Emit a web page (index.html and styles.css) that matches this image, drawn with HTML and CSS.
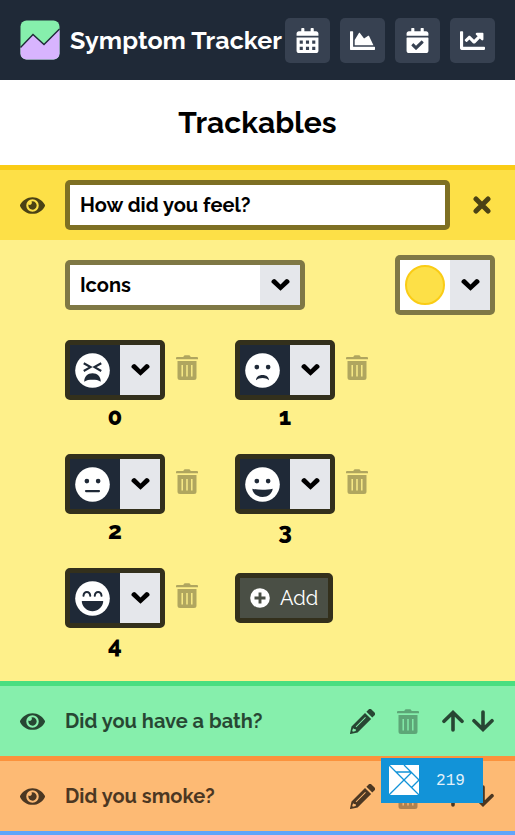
FILE: index.html
```html
<!DOCTYPE html>
<html lang="en">
<head>
<meta charset="utf-8">
<title>Symptom Tracker</title>
<link rel="stylesheet" href="styles.css">
</head>
<body>
<svg class="defs" aria-hidden="true">
  <symbol id="chevron" viewBox="0 0 20 14"><path d="M10 13 1.100 4.900a2 2 0 0 1 0-2.800L2 1.300a2 2 0 0 1 2.700 0L10 6.400l5.300-5.100a2 2 0 0 1 2.700 0l.9.800a2 2 0 0 1 0 2.800z" fill="currentColor"/></symbol>
  <symbol id="trash" viewBox="0 0 22 25"><path fill="currentColor" fill-rule="evenodd" d="M1 2h6.300c.5-1.300 1-1.800 2-1.800h3.400c1 0 1.500.5 2 1.800H21a1 1 0 0 1 1 1v1.200H0V3a1 1 0 0 1 1-1zM1.500 6h19v16.500A2.500 2.500 0 0 1 18 25H4a2.500 2.500 0 0 1-2.500-2.500zM5.500 10v11.500h1.400V10zm4.800 0v11.500h1.400V10zm4.800 0v11.500h1.400V10z"/></symbol>
  <symbol id="eye" viewBox="0 0 576 512"><path fill="currentColor" d="M572.52 241.4C518.29 135.59 410.93 64 288 64S57.68 135.64 3.48 241.41a32.35 32.35 0 0 0 0 29.19C57.71 376.41 165.07 448 288 448s230.32-71.64 284.52-177.41a32.35 32.35 0 0 0 0-29.19zM288 400a144 144 0 1 1 144-144 143.93 143.93 0 0 1-144 144zm0-240a95.31 95.31 0 0 0-25.31 3.79 47.85 47.85 0 0 1-66.9 66.9A95.78 95.78 0 1 0 288 160z"/></symbol>
  <symbol id="pencil" viewBox="0 0 25 25"><path fill="currentColor" fill-rule="evenodd" d="M15 3.900l6.100 6.100L7.600 23.500 0.600 25a.6.6 0 0 1-.6-.6l1.500-7zM3.100 19.300 2.200 22l.8.8 2.800-.9v-1.700l-1.700-.1zM5.700 17.600l.6.6L15.800 8.700l-.6-.6zM16.400 2.700l2-2a2.300 2.300 0 0 1 3.300 0l2.600 2.600a2.300 2.300 0 0 1 0 3.300l-2 2z"/></symbol>
  <symbol id="arrow" viewBox="0 0 22 22"><path d="M11 20V3M2 11.300 11 2.500l9 8.800" fill="none" stroke="currentColor" stroke-width="3.600" stroke-linecap="round"/></symbol>
</svg>

<header class="topbar">
  <svg class="logo" viewBox="0 0 40 40"><rect x=".5" y=".5" width="39" height="39" rx="6" fill="#86efac"/><path d="M.5 27.500 13 14.500l11 10L39.500 9v24.500a6 6 0 0 1-6 6h-27a6 6 0 0 1-6-6z" fill="#d8b4fe"/><path d="M.5 27.500 13 14.500l11 10L39.500 9" fill="none" stroke="#1f2937" stroke-width="1.400"/></svg>
  <h1 class="brand">Symptom Tracker</h1>
  <nav class="nav">
    <a class="nav-btn"><svg viewBox="0 0 448 512"><path fill="currentColor" fill-rule="evenodd" d="M0 464c0 26.500 21.500 48 48 48h352c26.500 0 48-21.500 48-48V192H0zM64 256h64v64H64zm128 0h64v64h-64zm128 0h64v64h-64zM64 384h64v64H64zm128 0h64v64h-64zm128 0h64v64h-64zM400 64h-48V16c0-8.800-7.200-16-16-16h-32c-8.800 0-16 7.200-16 16v48H160V16c0-8.800-7.200-16-16-16h-32c-8.800 0-16 7.200-16 16v48H48C21.500 64 0 85.500 0 112v48h448v-48c0-26.500-21.500-48-48-48z"/></svg></a>
    <a class="nav-btn"><svg viewBox="0 0 512 512"><path fill="currentColor" d="M500 384c6.600 0 12 5.400 12 12v40c0 6.600-5.400 12-12 12H12c-6.600 0-12-5.400-12-12V76c0-6.600 5.400-12 12-12h40c6.600 0 12 5.400 12 12v308h436zM372.700 159.500L288 216l-85.300-113.700c-5.100-6.800-15.500-6.300-19.900 1L96 248v104h384l-89.900-187.800c-3.200-6.500-11.400-8.700-17.400-4.700z"/></svg></a>
    <a class="nav-btn"><svg viewBox="0 0 448 512"><path fill="currentColor" d="M436 160H12c-6.627 0-12-5.373-12-12v-36c0-26.510 21.490-48 48-48h48V12c0-6.627 5.373-12 12-12h40c6.627 0 12 5.373 12 12v52h128V12c0-6.627 5.373-12 12-12h40c6.627 0 12 5.373 12 12v52h48c26.510 0 48 21.490 48 48v36c0 6.627-5.373 12-12 12zM12 192h424c6.627 0 12 5.373 12 12v260c0 26.510-21.490 48-48 48H48c-26.510 0-48-21.490-48-48V204c0-6.627 5.373-12 12-12zm333.296 95.947l-28.169-28.398c-4.667-4.705-12.265-4.736-16.970-.068L194.120 364.665l-45.980-46.352c-4.667-4.705-12.266-4.736-16.971-.068l-28.397 28.170c-4.705 4.667-4.736 12.265-.068 16.970l82.601 83.269c4.667 4.705 12.265 4.736 16.970.068l142.953-141.805c4.705-4.667 4.736-12.265.068-16.970z"/></svg></a>
    <a class="nav-btn"><svg viewBox="0 0 512 512"><path fill="currentColor" d="M496 384H64V80c0-8.840-7.160-16-16-16H16C7.160 64 0 71.160 0 80v336c0 17.670 14.330 32 32 32h464c8.840 0 16-7.160 16-16v-32c0-8.840-7.160-16-16-16zM464 96H345.940c-21.380 0-32.090 25.850-16.970 40.970l32.400 32.400L288 242.750l-73.370-73.370c-12.500-12.500-32.760-12.500-45.250 0l-68.690 68.690c-6.250 6.250-6.250 16.380 0 22.630l22.620 22.620c6.250 6.250 16.380 6.250 22.630 0L192 237.250l73.370 73.370c12.500 12.500 32.760 12.500 45.250 0l96-96 32.400 32.400c15.120 15.120 40.970 4.410 40.970-16.970V112c.01-8.840-7.150-16-15.990-16z"/></svg></a>
  </nav>
</header>

<h2 class="page-title">Trackables</h2>

<main>
  <section class="yellow">
    <div class="row">
      <svg class="eye"><use href="#eye"/></svg>
      <div class="field name-field"><span>How did you feel?</span></div>
      <svg class="close" viewBox="0 0 18 18"><path d="M3 3l12 12M15 3 3 15" fill="none" stroke="currentColor" stroke-width="5" stroke-linecap="round"/></svg>
    </div>
    <div class="panel">
      <div class="options">
        <div class="field select"><span class="select-text">Icons</span><span class="drop"><svg><use href="#chevron"/></svg></span></div>
        <div class="field picker"><span class="swatch-box"><i class="swatch"></i></span><span class="drop"><svg><use href="#chevron"/></svg></span></div>
      </div>
      <div class="icons">
        <div class="item">
          <div class="choice"><div class="picker dark"><span class="face"><svg viewBox="0 0 36 36"><circle cx="18" cy="18" r="17.800" fill="#fff"/><path d="M9 10.500l7 4-7 4M27 10.500l-7 4 7 4" fill="none" stroke="#1f2937" stroke-width="2.200"/><path d="M9.500 29.500c0-5.500 3.500-8.700 8.500-8.700s8.500 3.200 8.500 8.700c-2.500-1.700-5-2-8.500-2s-6 .3-8.500 2z" fill="#1f2937"/></svg></span><span class="drop"><svg><use href="#chevron"/></svg></span></div><span class="num">0</span></div>
          <svg class="trash"><use href="#trash"/></svg>
        </div>
        <div class="item">
          <div class="choice"><div class="picker dark"><span class="face"><svg viewBox="0 0 36 36"><circle cx="18" cy="18" r="17.800" fill="#fff"/><circle cx="12.200" cy="14.500" r="2.400" fill="#1f2937"/><circle cx="23.800" cy="14.500" r="2.400" fill="#1f2937"/><path d="M11.300 28c0-3.300 2.700-5.500 6.700-5.500s6.700 2.200 6.700 5.500c-2-1.500-4-2.200-6.700-2.200s-4.700.7-6.700 2.200z" fill="#1f2937"/></svg></span><span class="drop"><svg><use href="#chevron"/></svg></span></div><span class="num">1</span></div>
          <svg class="trash"><use href="#trash"/></svg>
        </div>
        <div class="item">
          <div class="choice"><div class="picker dark"><span class="face"><svg viewBox="0 0 36 36"><circle cx="18" cy="18" r="17.800" fill="#fff"/><circle cx="12.200" cy="14.500" r="2.400" fill="#1f2937"/><circle cx="23.800" cy="14.500" r="2.400" fill="#1f2937"/><path d="M11.300 24.800h13.400" stroke="#1f2937" stroke-width="2.200" stroke-linecap="round"/></svg></span><span class="drop"><svg><use href="#chevron"/></svg></span></div><span class="num">2</span></div>
          <svg class="trash"><use href="#trash"/></svg>
        </div>
        <div class="item">
          <div class="choice"><div class="picker dark"><span class="face"><svg viewBox="0 0 36 36"><circle cx="18" cy="18" r="17.800" fill="#fff"/><circle cx="12.200" cy="14.500" r="2.400" fill="#1f2937"/><circle cx="23.800" cy="14.500" r="2.400" fill="#1f2937"/><path d="M7.500 22.300c6 1.500 15 1.500 21 0-.5 5-5 8.500-10.500 8.500S8 27.300 7.500 22.300z" fill="#1f2937"/></svg></span><span class="drop"><svg><use href="#chevron"/></svg></span></div><span class="num">3</span></div>
          <svg class="trash"><use href="#trash"/></svg>
        </div>
        <div class="item">
          <div class="choice"><div class="picker dark"><span class="face"><svg viewBox="0 0 36 36"><circle cx="18" cy="18" r="17.800" fill="#fff"/><path d="M8.700 15.200c.6-5.200 6.400-5.200 7 0M20.300 15.200c.6-5.200 6.400-5.200 7 0" fill="none" stroke="#1f2937" stroke-width="2" stroke-linecap="round"/><path d="M8 20.500h20c1 0 1.200.5 1 1.200-.9 5.500-5.500 9.500-11 9.500s-10.100-4-11-9.500c-.2-.7 0-1.200 1-1.200z" fill="#1f2937"/></svg></span><span class="drop"><svg><use href="#chevron"/></svg></span></div><span class="num">4</span></div>
          <svg class="trash"><use href="#trash"/></svg>
        </div>
        <button class="add"><svg viewBox="0 0 20 20"><circle cx="10" cy="10" r="9.800" fill="#fff"/><path d="M10 4.500v11M4.500 10h11" stroke="#4a4f45" stroke-width="2.900"/></svg><span>Add</span></button>
      </div>
    </div>
  </section>

  <section class="green">
    <div class="row">
      <svg class="eye"><use href="#eye"/></svg>
      <span class="label">Did you have a bath?</span>
      <svg class="pencil"><use href="#pencil"/></svg>
      <svg class="trash"><use href="#trash"/></svg>
      <svg class="arrow"><use href="#arrow"/></svg>
      <svg class="arrow down"><use href="#arrow"/></svg>
    </div>
  </section>
  <section class="orange">
    <div class="row">
      <svg class="eye"><use href="#eye"/></svg>
      <span class="label">Did you smoke?</span>
      <svg class="pencil"><use href="#pencil"/></svg>
      <svg class="trash"><use href="#trash"/></svg>
      <svg class="arrow"><use href="#arrow"/></svg>
      <svg class="arrow down"><use href="#arrow"/></svg>
    </div>
  </section>
  <section class="blue"></section>
</main>

<aside class="badge">
  <svg viewBox="0 0 30 30"><path fill="#fff" d="M0 0h30v30H0z"/><path d="M0 0l30 30M0 30 22.500 7.500M15 0l15 15M7 7h15.500M30 15l-7.500 7.500" fill="none" stroke="#1293d8" stroke-width="1.300"/></svg>
  <span class="count">219</span>
</aside>
</body>
</html>
```

FILE: styles.css
```css
* { box-sizing: border-box; }

body {
  margin: 0;
  background: #fff;
  color: #000;
  font-family: Raleway, Lato, "Open Sans", sans-serif;
  font-size: 20px;
  font-weight: 700;
  letter-spacing: 0.04px;
}

svg { display: block; flex: none; }
.defs { position: absolute; width: 0; height: 0; }

.topbar {
  display: flex;
  align-items: center;
  height: 80px;
  padding: 0 20px;
  background: #1f2937;
  color: #fff;
}
.logo { width: 40px; height: 40px; }
.brand {
  width: 215px;
  margin: 0 0 0 10px;
  font-size: 25px;
  line-height: 40px;
  letter-spacing: 0.07px;
  white-space: nowrap;
}
.nav { display: flex; gap: 10px; }
.nav-btn {
  display: flex;
  align-items: center;
  justify-content: center;
  width: 45px;
  height: 45px;
  border-radius: 5px;
  background: #374151;
}
.nav-btn svg { width: 25px; height: 25px; }

.page-title {
  height: 85px;
  margin: 0;
  font-size: 30px;
  line-height: 85px;
  text-align: center;
}

section { border-top: 5px solid; }
.yellow { border-color: #facc15; background: #fde047; }
.green { border-color: #4ade80; background: #86efac; }
.orange { border-color: #fb923c; background: #fdba74; }
.blue { border-width: 4px; border-color: #60a5fa; }

.row {
  display: flex;
  align-items: center;
  height: 70px;
  padding: 0 20px;
}
.eye { width: 25px; height: 25px; margin-right: 20px; opacity: .7; }
.close { width: 18px; height: 18px; margin: 0 4px 0 23px; opacity: .7; }

.field {
  display: flex;
  border: 5px solid rgba(0, 0, 0, .5);
  border-radius: 5px;
  background: #fff;
  background-clip: padding-box;
}
.name-field {
  flex: 1;
  height: 50px;
  padding-left: 10px;
  line-height: 40px;
}

.panel { height: 441px; padding: 15px 20px 0 65px; background: #fef08a; }
.options { display: flex; align-items: center; justify-content: space-between; }
.select { width: 240px; height: 50px; }
.select-text { flex: 1; padding-left: 10px; line-height: 40px; }
.drop {
  display: flex;
  align-items: center;
  justify-content: center;
  width: 40px;
  background: #e5e7eb;
}
.drop svg { width: 19px; height: 14px; }
.picker { display: flex; width: 100px; height: 60px; }
.swatch-box { display: flex; align-items: center; justify-content: center; width: 50px; }
.swatch {
  width: 40px;
  height: 40px;
  border: 2px solid #facc15;
  border-radius: 50%;
  background: #fde047;
}

.icons {
  display: grid;
  grid-template-columns: 170px 170px;
  grid-auto-rows: 114px;
  margin-top: 25px;
}
.item { display: flex; }
.choice { width: 100px; }
.dark { border: 5px solid #33301c; border-radius: 5px; background: #1f2937; }
.face { display: flex; align-items: center; width: 50px; padding-left: 5px; }
.face svg { width: 35px; height: 35px; }
.trash { width: 22px; height: 25px; opacity: .3; }
.item .trash { margin: 15px 0 0 11px; }
.num {
  display: block;
  height: 34px;
  font-size: 24px;
  font-weight: 800;
  line-height: 33px;
  text-align: center;
}

.add {
  display: flex;
  align-items: center;
  width: 98px;
  height: 50px;
  margin: 5px 0 0;
  padding: 0 0 0 10px;
  border: 5px solid #33301c;
  border-radius: 5px;
  background: #4a4f45;
  color: #fff;
  font: 400 20px/40px Raleway, Lato, sans-serif;
}
.add svg { width: 20px; height: 20px; margin-right: 10px; }

.label { flex: 1; white-space: nowrap; opacity: .7; }
.pencil { width: 25px; height: 25px; margin-right: 22px; opacity: .7; }
.row .trash { margin-right: 23px; }
.arrow { width: 22px; height: 22px; margin-right: 8px; opacity: .7; }
.down { margin-right: 1px; transform: rotate(180deg); }
.row .trash { margin-left: -.5px; margin-right: 23.5px; }

.badge {
  position: absolute;
  left: 381px;
  top: 758px;
  display: flex;
  align-items: center;
  width: 102px;
  height: 45px;
  padding-left: 8px;
  background: #1293d8;
  color: #fff;
  font: 400 16px "Liberation Mono", monospace;
}
.badge svg { width: 30px; height: 30px; margin: 0 17px 1px 0; }
.count { opacity: .88; }
```
